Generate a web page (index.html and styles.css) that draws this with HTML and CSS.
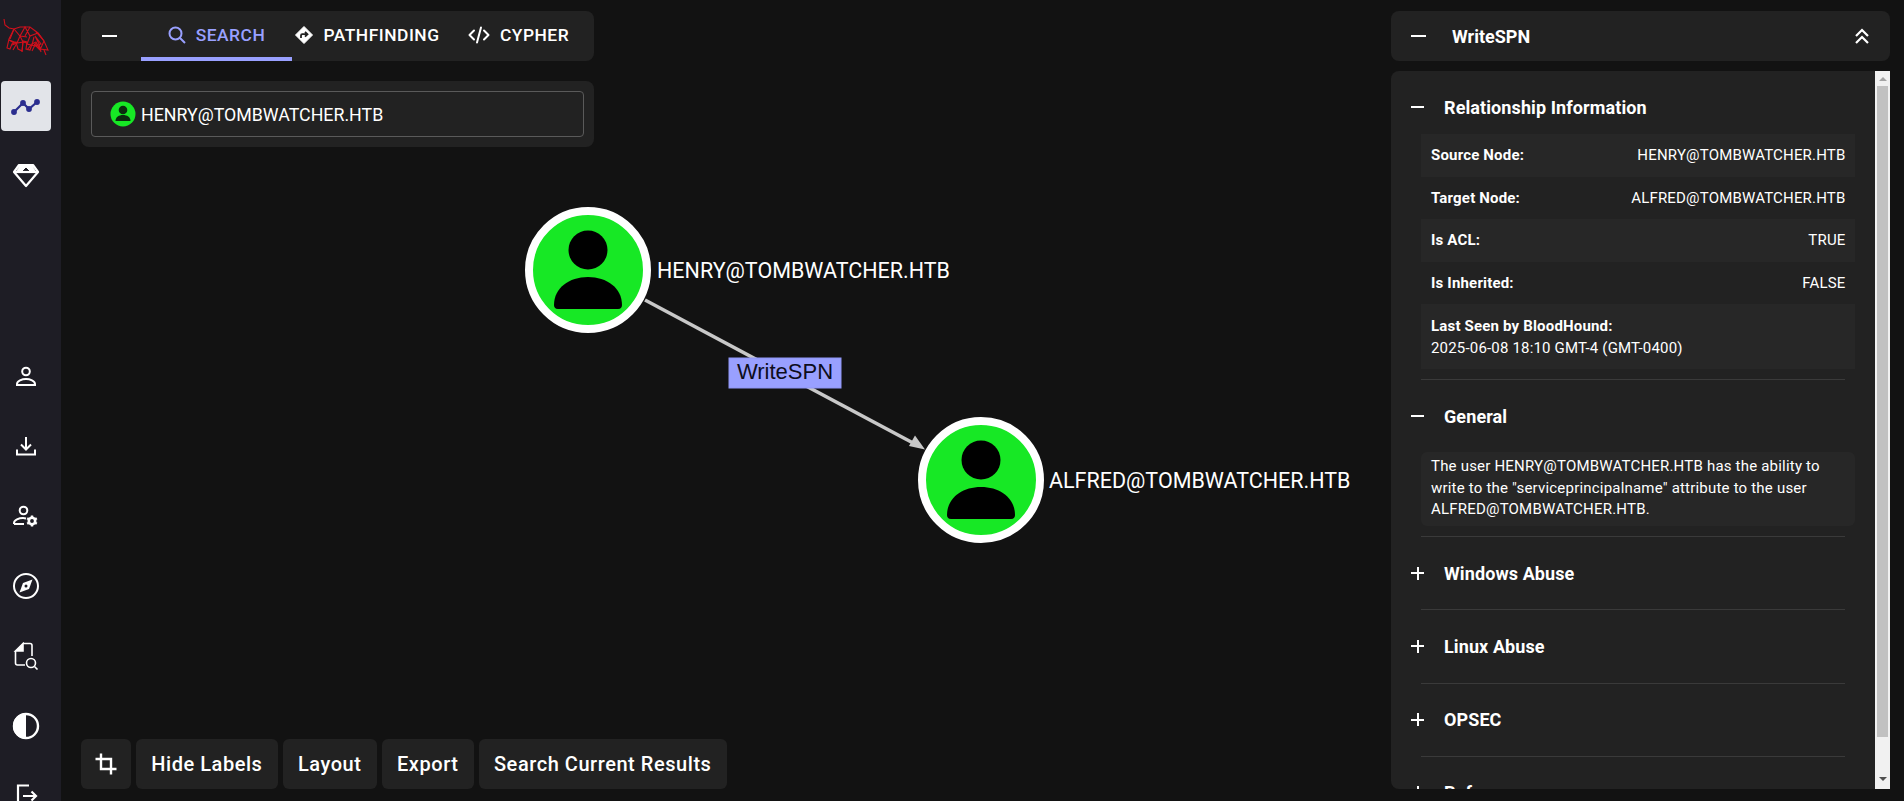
FILE: index.html
```html
<!DOCTYPE html>
<html lang="en">
<head>
    <meta charset="UTF-8">
    <title>BloodHound</title>
    <link rel="stylesheet" href="styles.css">
</head>
<body>
<div class="app">
    <!-- Left navigation -->
    <nav class="sidebar">
        <div class="logo">
            <svg width="61" height="50" viewBox="0 0 61 50" fill="none" stroke="#d0101c" stroke-width="1.100">
                <path d="M4 9l1 6 4 3 5 1 6-2 10 0 8 6 6 8 4 9-8-1-4-7-4 2-2 6-4-1 1-7-4-1-1 10-4-2-2-7-4 2-2 5-3-1 2-9 5-10"/>
                <path d="M14 19l6 7 5-9 5 9 8-3-8 3-3 8 8 2 6-2-6-8 4 8 2 8M20 26l-3 7 6-1-3-6 7 1M17 33l6-1 4 1M32 35l2-8M36 33l4 7M23 32l4 1M30 17l-5 9M9 30l8 3M12 35l5-2M40 40l4-9"/>
                <path d="M10 29l4-10M9 30l5 3 3 0M13 40l4-7M22 42l1-10M27 40l4-5M36 33l-4 8M40 40l-6-6M44 31l-8-9M38 23l6 8M44 40l2 5"/>
            </svg>
        </div>
        <a class="nav-item active">
            <svg width="30" height="20" viewBox="0 0 30 20" fill="#2b2e8f" stroke="#2b2e8f" stroke-width="2.200">
                <path d="M3 16l9-9 6 6 8-7" fill="none"/>
                <circle cx="3" cy="16" r="1.800"/><circle cx="12" cy="7" r="1.800"/><circle cx="18" cy="13" r="1.800"/><circle cx="26" cy="6" r="1.800"/>
            </svg>
        </a>
        <a class="nav-item">
            <svg width="28" height="26" viewBox="0 0 28 26" fill="none" stroke="#fff" stroke-width="2.2" stroke-linejoin="round">
                <path d="M7 2h14l5 7-12 14L2 9z"/>
                <path d="M3 9h22"/>
                <path d="M7 3h14l-4 4-3-3-3 3z" fill="#fff" stroke-width="1"/>
                <path d="M5 8l2-4 4 4zM23 8l-2-4-4 4z" fill="#fff" stroke-width="1"/>
            </svg>
        </a>
        <div class="nav-gap"></div>
        <a class="nav-item">
            <svg width="24" height="24" viewBox="0 0 24 24" fill="none" stroke="#fff" stroke-width="2">
                <circle cx="12" cy="7.5" r="3.8"/>
                <path d="M3 21v-1c0-3 5-5 9-5s9 2 9 5v1z"/>
            </svg>
        </a>
        <a class="nav-item">
            <svg width="24" height="24" viewBox="0 0 24 24" fill="none" stroke="#fff" stroke-width="2">
                <path d="M12 3v12M7 10.500l5 5 5-5M3 15.500v5h18v-5"/>
            </svg>
        </a>
        <a class="nav-item">
            <svg width="28" height="24" viewBox="0 0 28 24" fill="none" stroke="#fff" stroke-width="2">
                <circle cx="11.500" cy="6.500" r="3.800"/>
                <path d="M2 20v-1c0-3 5-5 9-5 1 0 2 .2 3 .4M2 20h10"/>
                <circle cx="20" cy="17" r="3.200" stroke-width="2.600"/>
                <path d="M20 11.500v2.500M20 20v2.500M15.200 14.200l2.200 1.300M22.600 18.500l2.200 1.300M15.200 19.800l2.200-1.300M22.600 15.500l2.200-1.300" stroke-width="2.400"/>
            </svg>
        </a>
        <a class="nav-item">
            <svg width="28" height="28" viewBox="0 0 28 28" fill="none" stroke="#fff" stroke-width="2">
                <circle cx="14" cy="14" r="12"/>
                <path d="M20.500 7.500l-3.500 9.500-9.500 3.500 3.500-9.500z" fill="#fff" stroke="none"/>
                <circle cx="14" cy="14" r="1.500" fill="#1e1d25" stroke="none"/>
            </svg>
        </a>
        <a class="nav-item">
            <svg width="26" height="28" viewBox="0 0 26 28" fill="none" stroke="#fff" stroke-width="1.600">
                <path d="M10 1.500h7c1 0 2 1 2 2V14M2.500 9v12c0 1 1 2 2 2H12"/>
                <path d="M10 1.500L2.500 9H10z" fill="#fff"/>
                <circle cx="18" cy="21" r="4.500"/>
                <path d="M21.500 24.500l3 3"/>
            </svg>
        </a>
        <a class="nav-item">
            <svg width="28" height="28" viewBox="0 0 28 28">
                <circle cx="14" cy="14" r="12" fill="none" stroke="#fff" stroke-width="2.400"/>
                <path d="M14 1a13 13 0 0 0 0 26z" fill="#fff"/>
            </svg>
        </a>
        <a class="nav-item">
            <svg width="24" height="24" viewBox="0 0 24 24" fill="none" stroke="#fff" stroke-width="2.200">
                <path d="M15 1.500H4v21h11M9 12h13M17.500 7.500L22 12l-4.500 4.500"/>
            </svg>
        </a>
    </nav>

    <!-- Graph canvas, nodes sit at their layout positions -->
    <svg class="graph" width="1904" height="801" viewBox="0 0 1904 801">
        <path class="edge" d="M645 300L915 444"/>
        <path class="edge-head" d="M925 449.500l-16-3.500 6-10.500z"/>
        <g transform="translate(588 270)">
            <circle r="59" fill="#17e825" stroke="#fff" stroke-width="8"/>
            <circle cy="-20" r="19.500"/>
            <path d="M-34 35c0-17 15-28 34-28s34 11 34 28c0 2-1 4-4 4h-60c-3 0-4-2-4-4z"/>
            <text class="node-label" x="69" y="8">HENRY@TOMBWATCHER.HTB</text>
        </g>
        <g transform="translate(981 480)">
            <circle r="59" fill="#17e825" stroke="#fff" stroke-width="8"/>
            <circle cy="-20" r="19.500"/>
            <path d="M-34 35c0-17 15-28 34-28s34 11 34 28c0 2-1 4-4 4h-60c-3 0-4-2-4-4z"/>
            <text class="node-label" x="68" y="8">ALFRED@TOMBWATCHER.HTB</text>
        </g>
        <rect class="edge-box" x="729" y="358" width="112" height="30"/>
        <text class="edge-label" x="785" y="379">WriteSPN</text>
    </svg>

    <main class="workspace">
        <section class="left-col">
            <div class="panel tabs-panel">
                <button class="collapse-btn"><span class="minus"></span></button>
                <div class="tab selected">
                    <svg width="18" height="18" viewBox="0 0 18 18" fill="none" stroke="#99a0ff" stroke-width="2">
                        <circle cx="7.500" cy="7.500" r="6"/><path d="M12 12l5 5"/>
                    </svg>
                    SEARCH
                </div>
                <div class="tab">
                    <svg width="18" height="18" viewBox="0 0 18 18">
                        <path d="M9 .5L17.500 9 9 17.500.5 9z" fill="#fff" stroke="#fff" stroke-linejoin="round"/>
                        <path d="M6 12V9.500c0-.8.5-1.300 1.300-1.300H12M10 5.800l2.500 2.400L10 10.600" fill="none" stroke="#222" stroke-width="1.800"/>
                    </svg>
                    PATHFINDING
                </div>
                <div class="tab">
                    <svg width="22" height="18" viewBox="0 0 22 18" fill="none" stroke="#fff" stroke-width="2" stroke-linejoin="round" stroke-linecap="round">
                        <path d="M6 4.500L1.500 9 6 13.500"/>
                        <path d="M16 4.500L20.500 9 16 13.500"/>
                        <path d="M13 1.500L9 16.500"/>
                    </svg>
                    CYPHER
                </div>
            </div>

            <div class="panel search-panel">
                <div class="search-box">
                    <svg width="26" height="26" viewBox="0 0 26 26">
                        <circle cx="13" cy="13" r="12.500" fill="#17e825"/>
                        <circle cx="13" cy="9" r="4.300" fill="#0b2c0e"/>
                        <path d="M5.500 20c0-4 3.500-6 7.500-6s7.500 2 7.500 6z" fill="#0b2c0e"/>
                    </svg>
                    <span>HENRY@TOMBWATCHER.HTB</span>
                </div>
            </div>

            <div class="toolbar">
                <button class="tool-btn icon-btn">
                    <svg width="24" height="24" viewBox="0 0 24 24" fill="none" stroke="#fff" stroke-width="2.400">
                        <path d="M7 1.500V17h15.500M1.500 7H17v15.500"/>
                    </svg>
                </button>
                <button class="tool-btn">Hide Labels</button>
                <button class="tool-btn">Layout</button>
                <button class="tool-btn">Export</button>
                <button class="tool-btn">Search Current Results</button>
            </div>
        </section>

        <!-- Edge details -->
        <aside class="right-col">
            <div class="panel detail-head">
                <span class="minus"></span>
                <h2>WriteSPN</h2>
                <svg width="16" height="18" viewBox="0 0 16 18" fill="none" stroke="#fff" stroke-width="2.200">
                    <path d="M2 9l6-6 6 6M2 16l6-6 6 6"/>
                </svg>
            </div>

            <div class="panel detail-body">
                <div class="detail-content">
                    <div class="section first">
                        <div class="section-head"><span class="minus small"></span><h3>Relationship Information</h3></div>
                        <div class="attr-row"><b>Source Node:</b><span>HENRY@TOMBWATCHER.HTB</span></div>
                        <div class="attr-row"><b>Target Node:</b><span>ALFRED@TOMBWATCHER.HTB</span></div>
                        <div class="attr-row"><b>Is ACL:</b><span>TRUE</span></div>
                        <div class="attr-row"><b>Is Inherited:</b><span>FALSE</span></div>
                        <div class="attr-row stacked"><b>Last Seen by BloodHound:</b><span>2025-06-08 18:10 GMT-4 (GMT-0400)</span></div>
                    </div>
                    <div class="section">
                        <div class="section-head"><span class="minus small"></span><h3>General</h3></div>
                        <p class="section-text">The user HENRY@TOMBWATCHER.HTB has the ability to write to the "serviceprincipalname" attribute to the user ALFRED@TOMBWATCHER.HTB.</p>
                    </div>
                    <div class="section closed">
                        <div class="section-head"><span class="plus"></span><h3>Windows Abuse</h3></div>
                    </div>
                    <div class="section closed">
                        <div class="section-head"><span class="plus"></span><h3>Linux Abuse</h3></div>
                    </div>
                    <div class="section closed">
                        <div class="section-head"><span class="plus"></span><h3>OPSEC</h3></div>
                    </div>
                    <div class="section closed">
                        <div class="section-head"><span class="plus"></span><h3>References</h3></div>
                    </div>
                </div>
                <div class="scrollbar">
                    <div class="arrow-up"></div>
                    <div class="thumb"></div>
                    <div class="arrow-down"></div>
                </div>
            </div>
        </aside>
    </main>
</div>
</body>
</html>
```

FILE: styles.css
```css
* {
    box-sizing: border-box;
}

html, body {
    margin: 0;
    height: 100%;
    overflow: hidden;
}

body {
    font-family: Roboto, sans-serif;
    background-color: #121212;
    color: #fff;
}

.app {
    position: relative;
    display: flex;
    height: 801px;
    overflow: hidden;
}

/* Sidebar */
.sidebar {
    flex: 0 0 61px;
    height: 801px;
    background-color: #1e1d25;
    padding: 10px 0 0 1px;
    overflow: hidden;
}

.logo {
    height: 50px;
    margin: 0 0 21px -1px;
}

.nav-item {
    display: flex;
    align-items: center;
    justify-content: center;
    width: 50px;
    height: 50px;
    margin-bottom: 20px;
    border-radius: 4px;
}

.nav-item.active {
    background-color: #e2e4e9;
}

.nav-gap {
    height: 130px;
}

/* Graph */
.graph {
    position: absolute;
    top: 0;
    left: 0;
}

.edge {
    stroke: #c8c8c8;
    stroke-width: 3.5;
    fill: none;
}

.edge-head {
    fill: #c8c8c8;
}

.edge-box {
    fill: #99a0ff;
    stroke: #8f96f5;
    stroke-width: 1;
}

.edge-label {
    font-family: "Liberation Sans", Arial, sans-serif;
    font-size: 22px;
    fill: #0d0d1c;
    text-anchor: middle;
}

.node-label {
    font-size: 21.5px;
    fill: #fff;
}

/* Workspace */
.workspace {
    position: relative;
    flex: 1;
    display: flex;
    justify-content: space-between;
    padding: 11px 14px 12px 20px;
    height: 801px;
}

.left-col {
    display: flex;
    flex-direction: column;
    align-items: flex-start;
}

.panel {
    background-color: #222222;
    border-radius: 8px;
}

.tabs-panel {
    display: flex;
    width: 513px;
    height: 50px;
    overflow: hidden;
}

.collapse-btn {
    flex: 0 0 60px;
    display: flex;
    align-items: center;
    padding: 0 0 0 21px;
    border: none;
    background: none;
}

.minus {
    display: block;
    flex: none;
    width: 15px;
    height: 2px;
    background-color: #fff;
}

.minus.small {
    width: 13px;
}

.plus {
    position: relative;
    display: block;
    flex: none;
    width: 13px;
    height: 2px;
    background-color: #fff;
}

.plus::after {
    content: "";
    position: absolute;
    left: 5.5px;
    top: -5.5px;
    width: 2px;
    height: 13px;
    background-color: #fff;
}

.tab {
    flex: 0 0 151px;
    display: flex;
    align-items: center;
    justify-content: center;
    gap: 10px;
    font-size: 17.4px;
    font-weight: 500;
    letter-spacing: 0.5px;
    border-bottom: 4px solid transparent;
    padding-top: 2px;
}

.tab svg {
    flex: none;
}

.tab.selected {
    color: #99a0ff;
    border-bottom-color: #99a0ff;
}

.search-panel {
    width: 513px;
    height: 66px;
    margin-top: 20px;
    padding: 10px;
}

.search-box {
    display: flex;
    align-items: center;
    gap: 5px;
    height: 46px;
    padding-left: 18px;
    border: 1px solid #5a5a5a;
    border-radius: 4px;
    font-size: 17.8px;
}

.toolbar {
    display: flex;
    gap: 5px;
    margin-top: auto;
}

.tool-btn {
    height: 50px;
    padding: 0 15.25px;
    border: none;
    border-radius: 6px;
    background-color: #222222;
    color: #fff;
    font-family: Roboto, sans-serif;
    font-size: 20px;
    font-weight: 500;
    letter-spacing: 0.55px;
}

.icon-btn {
    display: flex;
    align-items: center;
    justify-content: center;
    width: 50px;
    padding: 0;
}

/* Right column */
.right-col {
    display: flex;
    flex-direction: column;
    gap: 10px;
    width: 499px;
}

.detail-head {
    display: flex;
    align-items: center;
    height: 50px;
    padding: 0 20px;
}

.detail-head h2 {
    flex: 1;
    margin: 0 0 0 26px;
    font-size: 18px;
    font-weight: 700;
}

.detail-body {
    flex: 1;
    display: flex;
    min-height: 0;
    border-radius: 8px 0 0 8px;
    overflow: hidden;
}

.detail-content {
    flex: 1;
    overflow: hidden;
    padding: 0 20px 0 30px;
}

.section {
    padding-bottom: 10px;
    border-bottom: 1px solid #3a3a3a;
    margin-right: 10px;
}

.section.closed {
    padding-bottom: 0;
}

.section.first .section-head {
    margin-bottom: -9px;
}

.section-head {
    display: flex;
    align-items: center;
    height: 72px;
    margin-left: -10px;
}

.section.closed .section-head {
    height: 72.25px;
}

.section-head h3 {
    margin: 0 0 0 20px;
    font-size: 18px;
    font-weight: 700;
    letter-spacing: 0.1px;
}

.attr-row {
    display: flex;
    justify-content: space-between;
    align-items: center;
    height: 42.5px;
    margin-right: -10px;
    padding: 0 9.5px 0 10px;
    font-size: 15px;
    letter-spacing: 0.18px;
}

.attr-row:nth-of-type(even) {
    background-color: #272727;
}

.attr-row b {
    font-weight: 700;
}

.attr-row.stacked {
    display: block;
    height: 65px;
    padding-top: 11px;
    line-height: 22px;
}

.attr-row.stacked b,
.attr-row.stacked span {
    display: block;
}

.section-text {
    margin: 0 -10px 0 0;
    padding: 4px 10px;
    height: 74px;
    background-color: #272727;
    border-radius: 6px;
    font-size: 15px;
    line-height: 21.5px;
    letter-spacing: 0.2px;
}

/* Scrollbar, drawn as in the capture */
.scrollbar {
    flex: 0 0 15px;
    display: flex;
    flex-direction: column;
    align-items: center;
    background-color: #f1f1f1;
}

.thumb {
    width: 11px;
    height: 651px;
    margin-top: 5px;
    background-color: #c1c1c1;
}

.arrow-up {
    margin-top: 6px;
    border-left: 4px solid transparent;
    border-right: 4px solid transparent;
    border-bottom: 4px solid #a3a3a3;
}

.arrow-down {
    margin-top: 40px;
    border-left: 4px solid transparent;
    border-right: 4px solid transparent;
    border-top: 4px solid #505050;
}
```
